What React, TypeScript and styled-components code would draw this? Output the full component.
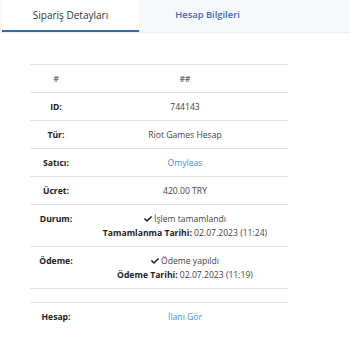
import React from 'react';
import styled, {createGlobalStyle} from "styled-components";
import {FaCheck} from "react-icons/fa";

const GlobalStyle = createGlobalStyle`
  body{
    margin: 0;
    background: #fff;
    font-family: "Open Sans", "Noto Sans", sans-serif;
    color: #444;
  }
`

const Tabs = styled.ul`
  display: flex;
  margin: 0;
  padding: 0 0 0 2px;
  list-style: none;
  background: #f7f8f9;
  box-shadow: 0 1px 1px rgba(0,0,0,0.06);
  height: 32px;
`

const Tab = styled.li<{ $active?: boolean }>`
  width: 137px;
  height: 32px;
  box-sizing: border-box;
  display: flex;
  align-items: center;
  justify-content: center;
  padding-bottom: 1px;
  font-size: ${p => p.$active ? '10px' : '9.4px'};
  font-weight: ${p => p.$active ? 400 : 600};
  color: ${p => p.$active ? '#333' : '#3a6fb4'};
  background: ${p => p.$active ? '#fff' : 'transparent'};
  border-bottom: 2px solid ${p => p.$active ? '#2c6db2' : 'transparent'};
`

const Content = styled.div`
  padding: 32px 0 0 30px;
`

const Table = styled.table`
  width: 258px;
  border-collapse: collapse;
  font-size: 8.6px;
  line-height: 14px;

  td, th{
    border-top: 1px solid #e6e6e6;
    padding: 7px 0 6px;
    text-align: center;
    vertical-align: top;
  }
  th{
    font-weight: 700;
    color: #777;
    font-size: 8px;
  }
  tr:last-child td{
    border-bottom: none;
  }
`

const Label = styled.td`
  width: 52px;
  font-weight: 700;
  color: #222;
`

const Value = styled.td`
  color: #444;
`

const Link = styled.a`
  color: #3f8ee6;
  text-decoration: none;
`

const Status = styled.div`
  display: flex;
  align-items: center;
  justify-content: center;
  gap: 2px;
  svg{
    width: 8px;
    height: 8px;
    color: #222;
  }
`

const Strong = styled.b`
  color: #222;
`

const App = () => {
    const rows = [
        {label: 'ID:', value: '744143'},
        {label: 'Tür:', value: 'Riot Games Hesap'},
        {label: 'Satıcı:', value: <Link>Omyleas</Link>},
        {label: 'Ücret:', value: '420.00 TRY'},
    ]
    return (
        <div>
            <GlobalStyle/>
            <Tabs>
                <Tab $active>Sipariş Detayları</Tab>
                <Tab>Hesap Bilgileri</Tab>
            </Tabs>
            <Content>
                <Table>
                    <tbody>
                    <tr>
                        <th>#</th>
                        <th>##</th>
                    </tr>
                    {rows.map((r) => (
                        <tr key={r.label}>
                            <Label>{r.label}</Label>
                            <Value>{r.value}</Value>
                        </tr>
                    ))}
                    <tr>
                        <Label>Durum:</Label>
                        <Value>
                            <Status><FaCheck/> İşlem tamamlandı</Status>
                            <div><Strong>Tamamlanma Tarihi:</Strong> 02.07.2023 (11:24)</div>
                        </Value>
                    </tr>
                    <tr>
                        <Label>Ödeme:</Label>
                        <Value>
                            <Status><FaCheck/> Ödeme yapıldı</Status>
                            <div><Strong>Ödeme Tarihi:</Strong> 02.07.2023 (11:19)</div>
                        </Value>
                    </tr>
                    <tr>
                        <Label></Label>
                        <Value></Value>
                    </tr>
                    <tr>
                        <Label>Hesap:</Label>
                        <Value><Link>İlanı Gör</Link></Value>
                    </tr>
                    </tbody>
                </Table>
            </Content>
        </div>
    );
};

export default App;
